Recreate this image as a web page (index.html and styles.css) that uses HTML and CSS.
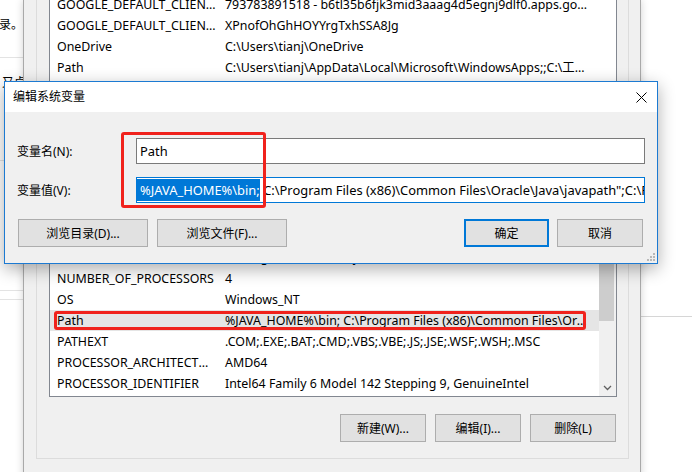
FILE: index.html
```html
<!DOCTYPE html>
<html lang="zh-CN">
<head>
<meta charset="utf-8">
<title>编辑系统变量</title>
<link rel="stylesheet" href="styles.css">
</head>
<body>
<div class="screen">
  <div class="bgwin">
    <div class="bg-item bg-item-1"><span class="bg-text">登录。</span></div>
    <div class="bg-item bg-item-2"><span class="bg-text">又卓</span></div>
    <div class="bg-item bg-item-3"></div>
    <div class="bg-item bg-item-4"></div>
  </div>
  <div class="bgwin-right"><div class="rline"></div></div>

  <div class="envwin">
    <div class="group">
      <div class="listbox list-user">
        <div class="lv-head"><span class="cell">变量</span><span class="cell">值</span></div>
        <div class="lv-rows">
          <div class="lv-row"><span class="cell">GOOGLE_DEFAULT_CLIENT_ID</span><span class="cell">793783891518 - b6tl35b6fjk3mid3aaag4d5egnj9dlf0.apps.googleusercontent.com</span></div>
          <div class="lv-row"><span class="cell">GOOGLE_DEFAULT_CLIENT_SECRET</span><span class="cell">XPnofOhGhHOYYrgTxhSSA8Jg</span></div>
          <div class="lv-row"><span class="cell">OneDrive</span><span class="cell">C:\Users\tianj\OneDrive</span></div>
          <div class="lv-row"><span class="cell">Path</span><span class="cell">C:\Users\tianj\AppData\Local\Microsoft\WindowsApps;;C:\工具\bin</span></div>
          <div class="lv-row"><span class="cell">TEMP</span><span class="cell">C:\Users\tianj\AppData\Local\Temp</span></div>
          <div class="lv-row"><span class="cell">TMP</span><span class="cell">C:\Users\tianj\AppData\Local\Temp</span></div>
        </div>
      </div>
      <div class="btnrow">
        <button class="btn btn-sm">新建(N)...</button>
        <button class="btn btn-sm">编辑(E)...</button>
        <button class="btn btn-sm">删除(D)</button>
      </div>
      <div class="grouplabel">系统变量(S)</div>
      <div class="listbox list-sys">
        <div class="lv-head"><span class="cell">变量</span><span class="cell">值</span></div>
        <div class="lv-main">
          <div class="lv-rows">
            <div class="lv-row"><span class="cell">JAVA_HOME</span><span class="cell">C:\Program Files\Java\jdk1.8.0_181</span></div>
            <div class="lv-row"><span class="cell">NUMBER_OF_PROCESSORS</span><span class="cell">4</span></div>
            <div class="lv-row"><span class="cell">OS</span><span class="cell">Windows_NT</span></div>
            <div class="lv-row lv-row-sel"><span class="cell">Path</span><span class="cell">%JAVA_HOME%\bin; C:\Program Files (x86)\Common Files\Oracle\Java\javapath</span></div>
            <div class="lv-row"><span class="cell">PATHEXT</span><span class="cell">.COM;.EXE;.BAT;.CMD;.VBS;.VBE;.JS;.JSE;.WSF;.WSH;.MSC</span></div>
            <div class="lv-row"><span class="cell">PROCESSOR_ARCHITECTURE</span><span class="cell">AMD64</span></div>
            <div class="lv-row"><span class="cell">PROCESSOR_IDENTIFIER</span><span class="cell">Intel64 Family 6 Model 142 Stepping 9, GenuineIntel</span></div>
          </div>
          <div class="vscroll">
            <div class="sb-up"></div>
            <div class="sb-thumb"></div>
            <div class="sb-track"></div>
            <div class="sb-down">
              <svg width="9" height="6" viewBox="0 0 9 6"><polyline points="1,1 4.5,4.5 8,1" fill="none" stroke="#606060" stroke-width="1.3"/></svg>
            </div>
          </div>
        </div>
      </div>
      <div class="btnrow">
        <button class="btn btn-sm">新建(W)...</button>
        <button class="btn btn-sm">编辑(I)...</button>
        <button class="btn btn-sm">删除(L)</button>
      </div>
    </div>
  </div>

  <div class="dialog">
    <div class="titlebar">
      <span class="title">编辑系统变量</span>
      <svg class="close" width="11" height="11" viewBox="0 0 11 11"><path d="M0.5 0.5 L10.5 10.5 M10.5 0.5 L0.5 10.5" stroke="#000" stroke-width="1"/></svg>
    </div>
    <div class="dlg-body">
      <div class="field">
        <span class="label">变量名(N):</span>
        <div class="edit">Path</div>
      </div>
      <div class="field field-2">
        <span class="label">变量值(V):</span>
        <div class="edit edit-focus"><span class="sel">%JAVA_HOME%\bin;</span> C:\Program Files (x86)\Common Files\Oracle\Java\javapath";C:\ProgramData\Oracle\Java\javapath</div>
      </div>
      <div class="dlg-buttons">
        <div class="btn-group">
          <button class="btn btn-wide">浏览目录(D)...</button>
          <button class="btn btn-wide">浏览文件(F)...</button>
        </div>
        <div class="btn-group btn-group-right">
          <button class="btn btn-ok">确定</button>
          <button class="btn btn-cancel">取消</button>
        </div>
      </div>
    </div>
    <svg class="grip" width="9" height="9" viewBox="0 0 9 9">
      <rect x="7" y="1" width="2" height="2" fill="#b8b8b8"/>
      <rect x="4" y="4" width="2" height="2" fill="#b8b8b8"/>
      <rect x="7" y="4" width="2" height="2" fill="#b8b8b8"/>
      <rect x="1" y="7" width="2" height="2" fill="#b8b8b8"/>
      <rect x="4" y="7" width="2" height="2" fill="#b8b8b8"/>
      <rect x="7" y="7" width="2" height="2" fill="#b8b8b8"/>
    </svg>
  </div>

  <div class="mark mark-edit"></div>
  <div class="mark mark-row"></div>
</div>
</body>
</html>
```

FILE: styles.css
```css
html, body {
  margin: 0;
  padding: 0;
  background: #fff;
}

body {
  font-family: "Noto Sans", "Noto Sans CJK SC", sans-serif;
  font-size: 12px;
  color: #000;
}

.screen {
  position: relative;
  width: 692px;
  height: 472px;
  overflow: hidden;
  background: #fff;
}

/* background window on the left */
.bgwin {
  position: absolute;
  left: 0;
  top: 0;
  width: 23px;
  height: 472px;
  background: #fff;
  overflow: hidden;
}

.bg-item {
  display: flex;
  justify-content: flex-end;
  box-sizing: border-box;
  border-bottom: 1px solid #e3e3e3;
  white-space: nowrap;
}

.bg-text {
  line-height: 16px;
  font-size: 12px;
}

.bg-item-1 { height: 58px; padding-top: 17px; }
.bg-item-2 { height: 103px; padding-top: 17px; justify-content: flex-start; padding-left: 2px; }
.bg-item-3 { height: 130px; }
.bg-item-4 { height: 9px; }

.bgwin-right {
  position: absolute;
  left: 641px;
  top: 0;
  right: 0;
  height: 472px;
  background: #fff;
}

.rline {
  height: 316px;
  border-bottom: 1px solid #d6d6d6;
}

/* environment variables window */
.envwin {
  position: absolute;
  left: 23px;
  top: 0;
  width: 618px;
  height: 490px;
  box-sizing: border-box;
  background: #f0f0f0;
  border-left: 1px solid #a9a9a9;
  border-right: 1px solid #a9a9a9;
  padding: 0 11px 0 12px;
  box-shadow: 0 0 8px rgba(0, 0, 0, 0.18);
}

.group {
  margin-top: -28px;
  border: 1px solid #dcdcdc;
  border-top: none;
  padding: 0 11px 16px 12px;
}

.listbox {
  border: 1px solid #828790;
  background: #fff;
}

.list-user {
  height: 180px;
  box-sizing: border-box;
  overflow: hidden;
}

.lv-head {
  display: grid;
  grid-template-columns: 168px 381px;
  height: 21px;
  line-height: 21px;
  border-bottom: 1px solid #e5e5e5;
  box-sizing: border-box;
}

.lv-rows {
  display: flex;
  flex-direction: column;
}

.lv-row {
  display: grid;
  grid-template-columns: 168px 381px;
  height: 21px;
  line-height: 21px;
  font-size: 12.4px;
}

.cell {
  padding: 0 2px 0 7px;
  white-space: nowrap;
  overflow: hidden;
  text-overflow: ellipsis;
}

.lv-row .cell + .cell {
  padding-right: 9px;
}

.lv-row-sel {
  background: #e5e5e5;
}

.lv-main {
  display: flex;
}

.list-sys .lv-rows {
  flex: 1;
  padding-bottom: 2px;
}

.vscroll {
  width: 17px;
  background: #f0f0f0;
  display: flex;
  flex-direction: column;
}

.sb-up { height: 14px; }

.sb-thumb {
  height: 60px;
  margin: 0 2px 0 0;
  background: #cdcdcd;
}

.sb-track { flex: 1; }

.sb-down {
  height: 17px;
  display: flex;
  align-items: center;
  justify-content: center;
  padding-right: 1px;
}

.btnrow {
  display: flex;
  justify-content: flex-end;
  gap: 9px;
  margin-top: 9px;
  margin-right: 1px;
}

.list-sys + .btnrow {
  margin-top: 17px;
}

.grouplabel {
  margin-top: 10px;
  height: 16px;
  line-height: 16px;
  margin-bottom: 10px;
}

.btn {
  font-family: inherit;
  font-size: 12px;
  color: #000;
  background: #e1e1e1;
  border: 1px solid #adadad;
  height: 28px;
  padding: 0;
  margin: 0;
  box-sizing: border-box;
  border-radius: 0;
}

.btn-sm { width: 86px; }

/* dialog */
.dialog {
  position: absolute;
  left: 4px;
  top: 81px;
  width: 654px;
  height: 183px;
  box-sizing: border-box;
  border: 1px solid #1c7ad2;
  background: #f0f0f0;
  box-shadow: 0 5px 16px rgba(0, 0, 0, 0.32);
}

.titlebar {
  height: 30px;
  background: #fff;
  display: flex;
  align-items: center;
  justify-content: space-between;
  padding: 0 10px 0 8px;
}

.title {
  font-size: 12px;
  line-height: 30px;
}

.close {
  display: block;
}

.dlg-body {
  padding: 26px 12px 0 12px;
}

.field {
  display: flex;
  align-items: center;
  height: 26px;
}

.field-2 {
  margin-top: 13px;
}

.label {
  width: 119px;
  flex: none;
}

.edit {
  flex: 1;
  height: 26px;
  box-sizing: border-box;
  border: 1px solid #7a7a7a;
  background: #fff;
  padding-left: 3px;
  line-height: 24px;
  font-size: 12.9px;
  white-space: nowrap;
  overflow: hidden;
}

.edit-focus {
  border-color: #0078d7;
  padding-left: 0;
}

.sel {
  display: inline-block;
  background: #0078d7;
  color: #fff;
  line-height: 22px;
  padding-left: 3px;
  vertical-align: top;
  margin-top: 1px;
}

.dlg-buttons {
  display: flex;
  justify-content: space-between;
  margin-top: 16px;
}

.btn-group {
  display: flex;
  gap: 9px;
  margin-left: 1px;
}

.btn-group-right {
  gap: 8px;
  margin-left: 0;
  margin-right: 2px;
}

.btn-wide { width: 130px; }

.btn-ok {
  width: 85px;
  border: 2px solid #0078d7;
}

.btn-cancel { width: 86px; }

.grip {
  position: absolute;
  right: 2px;
  bottom: 2px;
}

/* red annotation boxes */
.mark {
  position: absolute;
  box-sizing: border-box;
  border: 3px solid #f0221c;
  border-radius: 3px;
}

.mark-edit {
  left: 121px;
  top: 132px;
  width: 145px;
  height: 76px;
}

.mark-row {
  left: 54px;
  top: 311px;
  width: 532px;
  height: 19px;
}
```
